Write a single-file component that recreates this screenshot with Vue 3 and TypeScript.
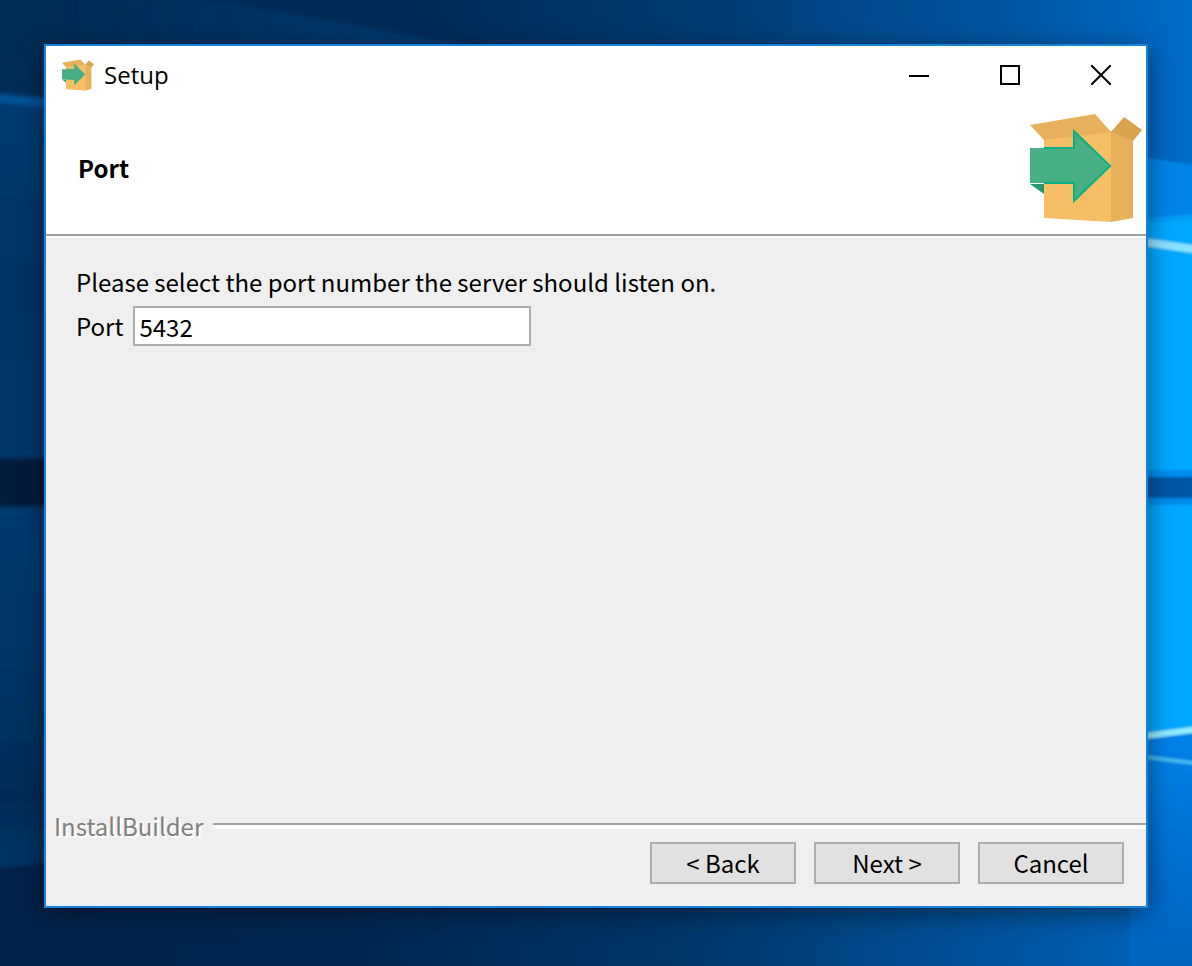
<script setup lang="ts">
import { ref } from 'vue'

const port = ref<string>('5432')
const actions: string[] = ['< Back', 'Next >', 'Cancel']
</script>

<template>
  <main class="desktop">
    <svg class="wallpaper" viewBox="0 0 1192 966" preserveAspectRatio="none" aria-hidden="true">
      <defs>
        <linearGradient id="top" x1="0" x2="1" y1="0" y2="0">
          <stop offset="0" stop-color="#002c55" />
          <stop offset="0.35" stop-color="#002a56" />
          <stop offset="0.6" stop-color="#003c74" />
          <stop offset="0.85" stop-color="#0056a2" />
          <stop offset="1" stop-color="#006cc8" />
        </linearGradient>
        <linearGradient id="bottom" x1="0" x2="1" y1="0" y2="0">
          <stop offset="0" stop-color="#002149" />
          <stop offset="0.3" stop-color="#002650" />
          <stop offset="0.55" stop-color="#003467" />
          <stop offset="0.8" stop-color="#004f94" />
          <stop offset="1" stop-color="#0066bf" />
        </linearGradient>
        <linearGradient id="left" x1="0" x2="0" y1="0" y2="1">
          <stop offset="0" stop-color="#003b72" />
          <stop offset="0.5" stop-color="#003365" />
          <stop offset="1" stop-color="#003769" />
        </linearGradient>
        <linearGradient id="leftLow" x1="0" x2="0" y1="0" y2="1">
          <stop offset="0" stop-color="#003a70" />
          <stop offset="0.5" stop-color="#003364" />
          <stop offset="0.8" stop-color="#002c56" />
          <stop offset="1" stop-color="#003566" />
        </linearGradient>
        <linearGradient id="rightLow" x1="0" x2="0" y1="0" y2="1">
          <stop offset="0" stop-color="#0083ea" />
          <stop offset="0.5" stop-color="#006fd0" />
          <stop offset="1" stop-color="#0064bb" />
        </linearGradient>
        <linearGradient id="ray" x1="0" x2="1" y1="0" y2="0">
          <stop offset="0" stop-color="#003a70" stop-opacity="0" />
          <stop offset="1" stop-color="#003a70" />
        </linearGradient>
        <filter id="soft"><feGaussianBlur stdDeviation="2" /></filter>
        <filter id="fine"><feGaussianBlur stdDeviation="1" /></filter>
      </defs>
      <rect width="1192" height="500" fill="url(#top)" />
      <rect y="500" width="1192" height="466" fill="url(#bottom)" />
      <path d="M60 0H215L480 48H60Z" fill="url(#ray)" filter="url(#soft)" />
      <g filter="url(#soft)">
        <path d="M-10 98L60 106V462H-10Z" fill="url(#left)" />
        <path d="M-10 97L60 104" stroke="#00529a" stroke-width="9" />
        <path d="M-10 458H60V506H-10Z" fill="#001a3b" />
        <path d="M-10 507H60V860L-10 870Z" fill="url(#leftLow)" />
      </g>
      <g filter="url(#fine)">
        <path d="M1130 155L1200 166V240H1130Z" fill="#0084e8" />
        <path d="M1130 223L1200 214V735H1130Z" fill="#00a8ff" />
        <path d="M1130 740L1200 732V980H1130Z" fill="url(#rightLow)" />
        <path d="M1130 222L1200 216" stroke="#009cf4" stroke-width="5" />
        <path d="M1130 240L1200 250" stroke="#8be2ff" stroke-width="8" />
        <path d="M1130 470H1200V505H1130Z" fill="#008cec" />
        <path d="M1130 477H1200V498H1130Z" fill="#0057a6" />
        <path d="M1130 738L1200 729" stroke="#90ebff" stroke-width="6" />
        <path d="M1130 755L1200 764" stroke="#43b9ef" stroke-width="4" />
      </g>
    </svg>

    <section class="window" aria-label="Setup">
      <header class="titlebar">
        <svg class="app-icon" viewBox="0 0 112 108" aria-hidden="true">
          <use href="#package" />
        </svg>
        <span class="title">Setup</span>
        <div class="controls">
          <button type="button" aria-label="Minimize">
            <svg viewBox="0 0 20 20"><path d="M0 11H20" /></svg>
          </button>
          <button type="button" aria-label="Maximize">
            <svg viewBox="0 0 20 20"><path d="M1 1H19V19H1Z" /></svg>
          </button>
          <button type="button" aria-label="Close">
            <svg viewBox="0 0 20 20"><path d="M0 0L20 20M20 0L0 20" /></svg>
          </button>
        </div>
      </header>

      <div class="banner">
        <h1>Port</h1>
        <svg class="logo" viewBox="0 0 112 108" aria-hidden="true">
          <g id="package">
            <path d="M14 24L81 17V108L14 104Z" fill="#f6bf66" />
            <path d="M81 17L103 25V104L81 108Z" fill="#e7b05a" />
            <path d="M0 11L65 0L81 18L14 26Z" fill="#e7b05a" />
            <path d="M81 18L94 3L112 16L103 27Z" fill="#d9a44f" />
            <path d="M0 70H14V80Z" fill="#239a6b" />
            <path d="M0 34H44V17L80 52L44 87V69H0Z" fill="#48b085" />
            <path d="M14 34H44V17L80 52L44 87V69H14" fill="none" stroke="#08af84" stroke-width="2" />
          </g>
        </svg>
      </div>

      <form class="body" @submit.prevent>
        <p>Please select the port number the server should listen on.</p>
        <div class="field">
          <label for="port">Port</label>
          <input id="port" v-model="port" type="text" />
        </div>
      </form>

      <footer>
        <div class="brand"><span>InstallBuilder</span></div>
        <div class="actions">
          <button v-for="action in actions" :key="action" type="button">{{ action }}</button>
        </div>
      </footer>
    </section>
  </main>
</template>

<style>
body {
  margin: 0;
}
</style>

<style scoped>
* {
  box-sizing: border-box;
}
.desktop {
  position: relative;
  display: flex;
  min-height: 100vh;
  padding: 44px 44px 58px;
  overflow: hidden;
  background: #003467;
  color: #000;
  font: 24px/32px "Noto Sans CJK JP", sans-serif;
}
.wallpaper {
  position: absolute;
  inset: 0;
  width: 100%;
  height: 100%;
}
.window {
  position: relative;
  display: flex;
  flex: 1;
  flex-direction: column;
  border: 2px solid #1683d9;
  background: #efefef;
  box-shadow: 0 6px 24px rgba(0, 0, 0, 0.45);
}
.titlebar {
  display: flex;
  align-items: center;
  height: 58px;
  padding-left: 16px;
  background: #fff;
}
.app-icon {
  width: 32px;
  height: 32px;
}
.title {
  margin-left: 10px;
  font: 24px/32px "Open Sans", sans-serif;
}
.controls {
  display: flex;
  height: 100%;
  margin-left: auto;
}
.controls button {
  display: grid;
  width: 91px;
  padding: 0;
  border: 0;
  background: none;
  place-items: center;
}
.controls svg {
  width: 20px;
  height: 20px;
  fill: none;
  stroke: #000;
  stroke-width: 2;
}
.banner {
  display: flex;
  align-items: center;
  justify-content: space-between;
  height: 134px;
  padding: 0 4px 4px 32px;
  border-bottom: 2px solid #fff;
  background: #fff;
  box-shadow: inset 0 -2px #a0a0a0;
}
h1 {
  margin: 0;
  font-size: 24px;
  font-weight: 700;
  line-height: 32px;
}
.logo {
  width: 112px;
  height: 108px;
}
.body {
  flex: 1;
  padding: 28px 30px;
}
.body p {
  margin: 0;
}
.field {
  display: flex;
  align-items: center;
  gap: 10px;
  margin-top: 8px;
}
.field input {
  width: 398px;
  height: 40px;
  padding: 0 4px;
  border: 2px solid #abacb3;
  border-radius: 0;
  background: #fff;
  color: #000;
  font: inherit;
  outline: none;
}
.brand {
  display: flex;
  align-items: center;
  gap: 10px;
  padding-left: 8px;
  color: #808080;
  text-shadow: 2px 2px #fff;
}
.brand::after {
  flex: 1;
  height: 4px;
  border-top: 2px solid #a0a0a0;
  background: #fff;
  content: "";
}
.actions {
  display: flex;
  justify-content: flex-end;
  gap: 18px;
  padding: 0 22px 22px;
}
.actions button {
  width: 146px;
  height: 42px;
  padding: 0;
  border: 2px solid #adadad;
  background: #e1e1e1;
  color: #000;
  font: inherit;
}
</style>
